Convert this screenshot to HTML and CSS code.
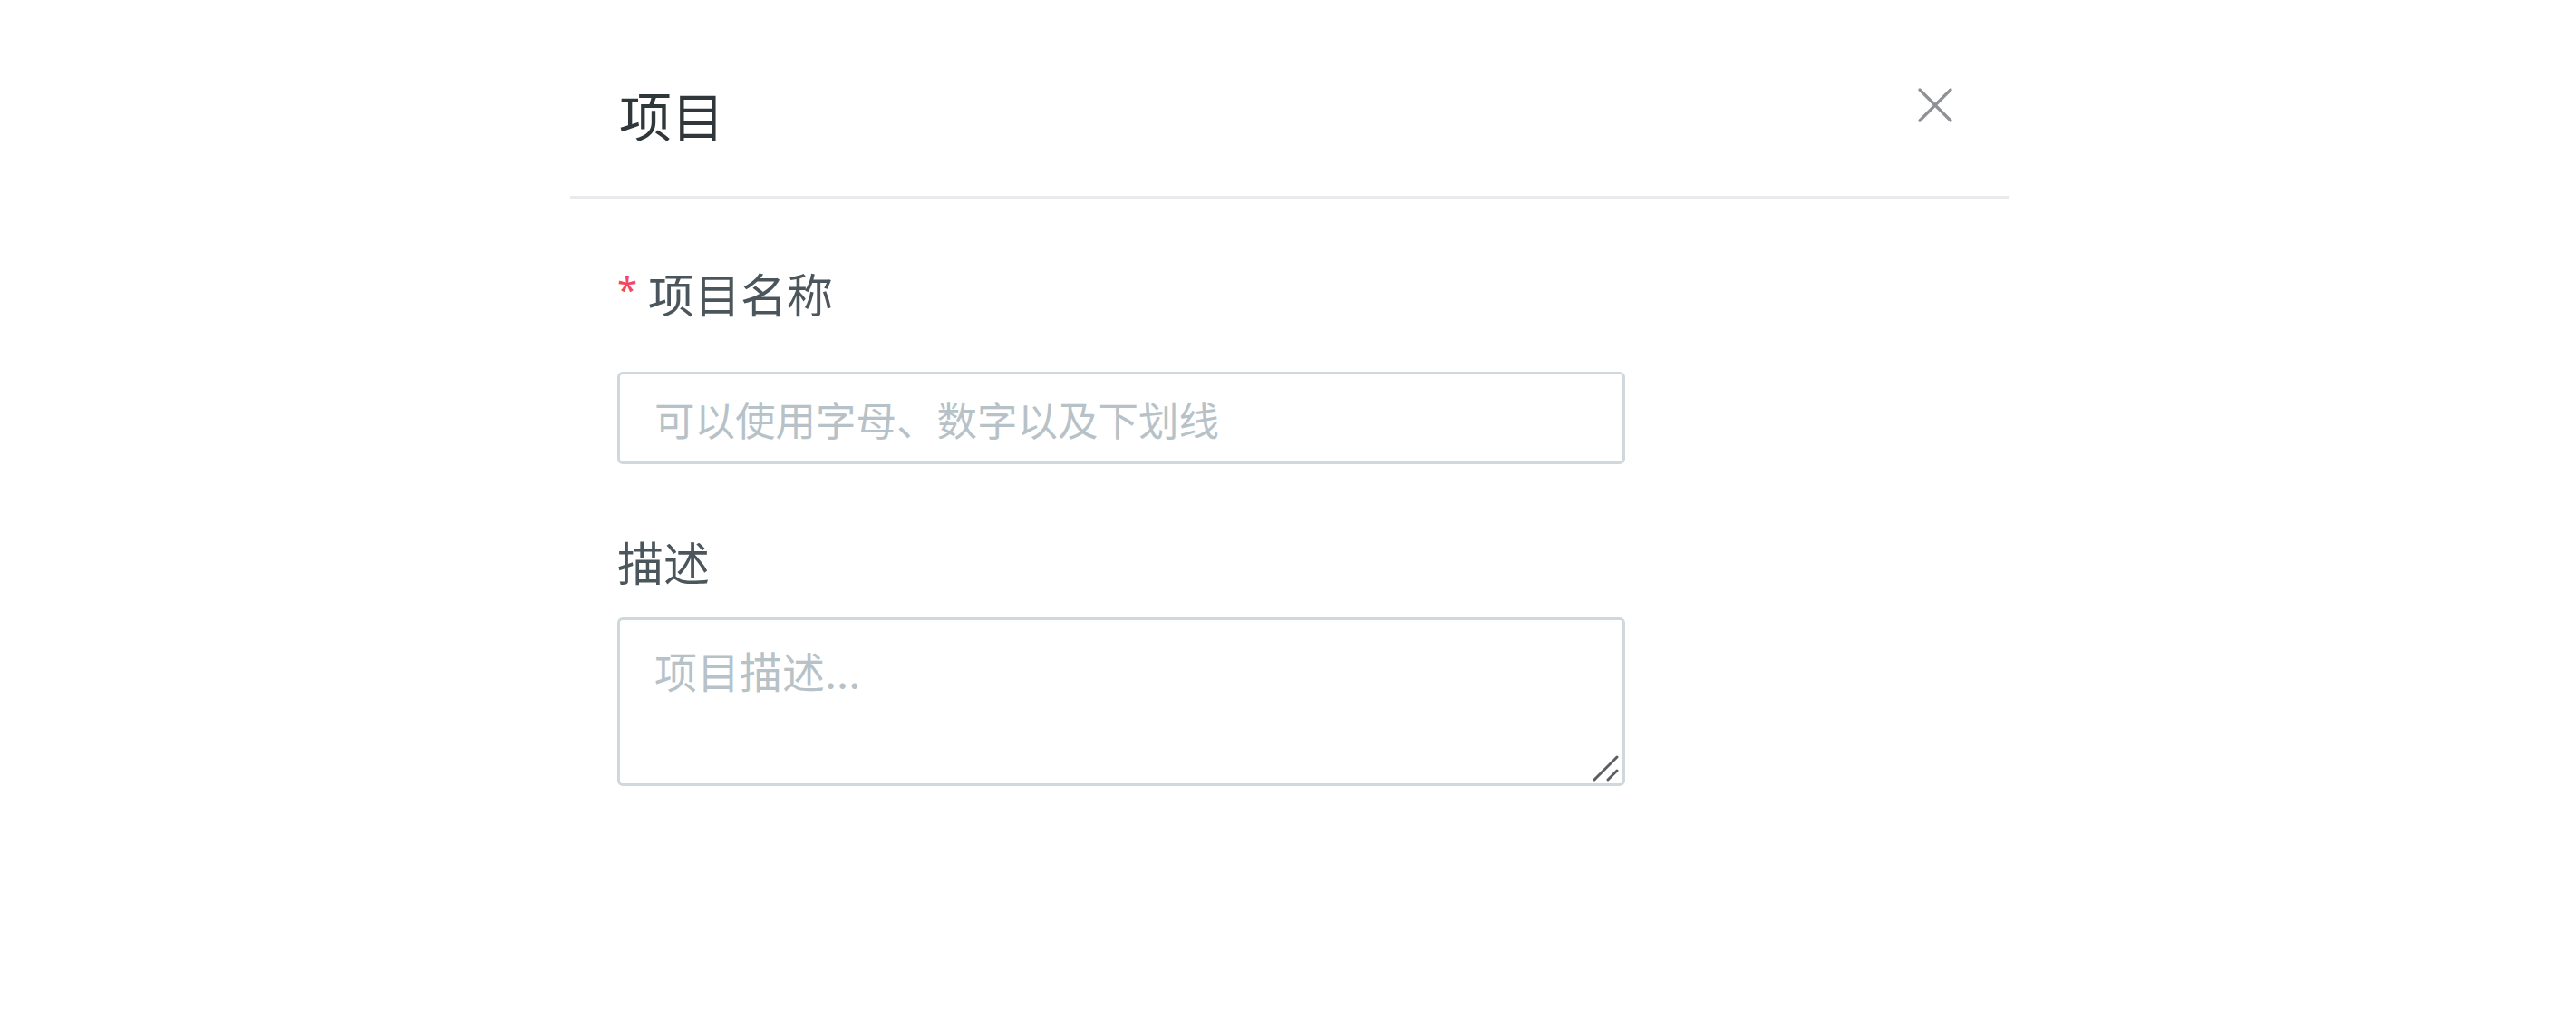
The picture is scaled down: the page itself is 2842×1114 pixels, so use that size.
FILE: index.html
```html
<!DOCTYPE html>
<html lang="zh-CN">
<head>
<meta charset="utf-8">
<title>项目</title>
<link rel="stylesheet" href="styles.css">
</head>
<body>
<div class="modal">
  <div class="modal-header">
    <div class="modal-title">项目</div>
    <button class="modal-close" type="button" aria-label="关闭">
      <svg width="38" height="38" viewBox="0 0 38 38" aria-hidden="true">
        <path d="M2 2 L36 36 M36 2 L2 36" stroke="#8e9196" stroke-width="3.2" stroke-linecap="round" fill="none"/>
      </svg>
    </button>
  </div>
  <div class="modal-body">
    <div class="form-item form-item-name">
      <label class="form-label"><span class="required">*</span>项目名称</label>
      <input class="form-input" type="text" placeholder="可以使用字母、数字以及下划线">
    </div>
    <div class="form-item form-item-desc">
      <label class="form-label">描述</label>
      <div class="textarea-wrap">
        <textarea class="form-textarea" placeholder="项目描述..."></textarea>
        <svg class="resize-grip" width="30" height="30" viewBox="0 0 30 30" aria-hidden="true">
          <path d="M2 28 L27 3 M17 28 L27 18" stroke="#5a5e62" stroke-width="3" stroke-linecap="round" fill="none"/>
        </svg>
      </div>
    </div>
  </div>
</div>
</body>
</html>
```

FILE: styles.css
```css
* {
  box-sizing: border-box;
}

html, body {
  margin: 0;
  padding: 0;
  background: #ffffff;
}

body {
  font-family: "Noto Sans CJK SC", "Noto Sans", sans-serif;
  color: #333a3f;
}

.modal {
  margin-left: 629px;
  width: 1588px;
}

.modal-header {
  display: flex;
  justify-content: space-between;
  align-items: flex-start;
  height: 219px;
  padding: 0 63px 0 54px;
  border-bottom: 3px solid #e8eaee;
}

.modal-title {
  margin-top: 97px;
  font-size: 58px;
  line-height: 58px;
  color: #30373b;
}

.modal-close {
  margin-top: 97px;
  padding: 0;
  width: 38px;
  height: 38px;
  border: 0;
  background: transparent;
  display: flex;
}

.modal-body {
  padding: 0 0 0 52px;
}

.form-item {
  display: flex;
  flex-direction: column;
  width: 1112px;
}

.form-item-name {
  padding-top: 78px;
}

.form-item-desc {
  padding-top: 81px;
}

.form-label {
  display: flex;
  align-items: flex-start;
  font-size: 51px;
  line-height: 52px;
  color: #4b565c;
}

.required {
  font-family: "Noto Sans", sans-serif;
  font-size: 40px;
  line-height: 40px;
  color: #f0485e;
  margin-right: 12px;
  margin-top: 2px;
}

.form-item-name .form-label {
  margin-bottom: 61px;
}

.form-item-desc .form-label {
  margin-bottom: 36px;
}

.form-input,
.form-textarea {
  display: block;
  width: 100%;
  margin: 0;
  border: 3px solid #cfd8dd;
  border-radius: 6px;
  background: #ffffff;
  font-family: "Noto Sans CJK SC", "Noto Sans", sans-serif;
  color: #333a3f;
  outline: none;
}

.form-input {
  height: 102px;
  padding: 0 38px;
  font-size: 44.5px;
  line-height: 46px;
}

.form-textarea {
  height: 186px;
  padding: 31px 38px;
  font-size: 47px;
  line-height: 48px;
  resize: none;
}

.form-input::placeholder,
.form-textarea::placeholder {
  color: #b7c2c8;
}

.textarea-wrap {
  position: relative;
}

.resize-grip {
  position: absolute;
  right: 6px;
  bottom: 5px;
}
```
